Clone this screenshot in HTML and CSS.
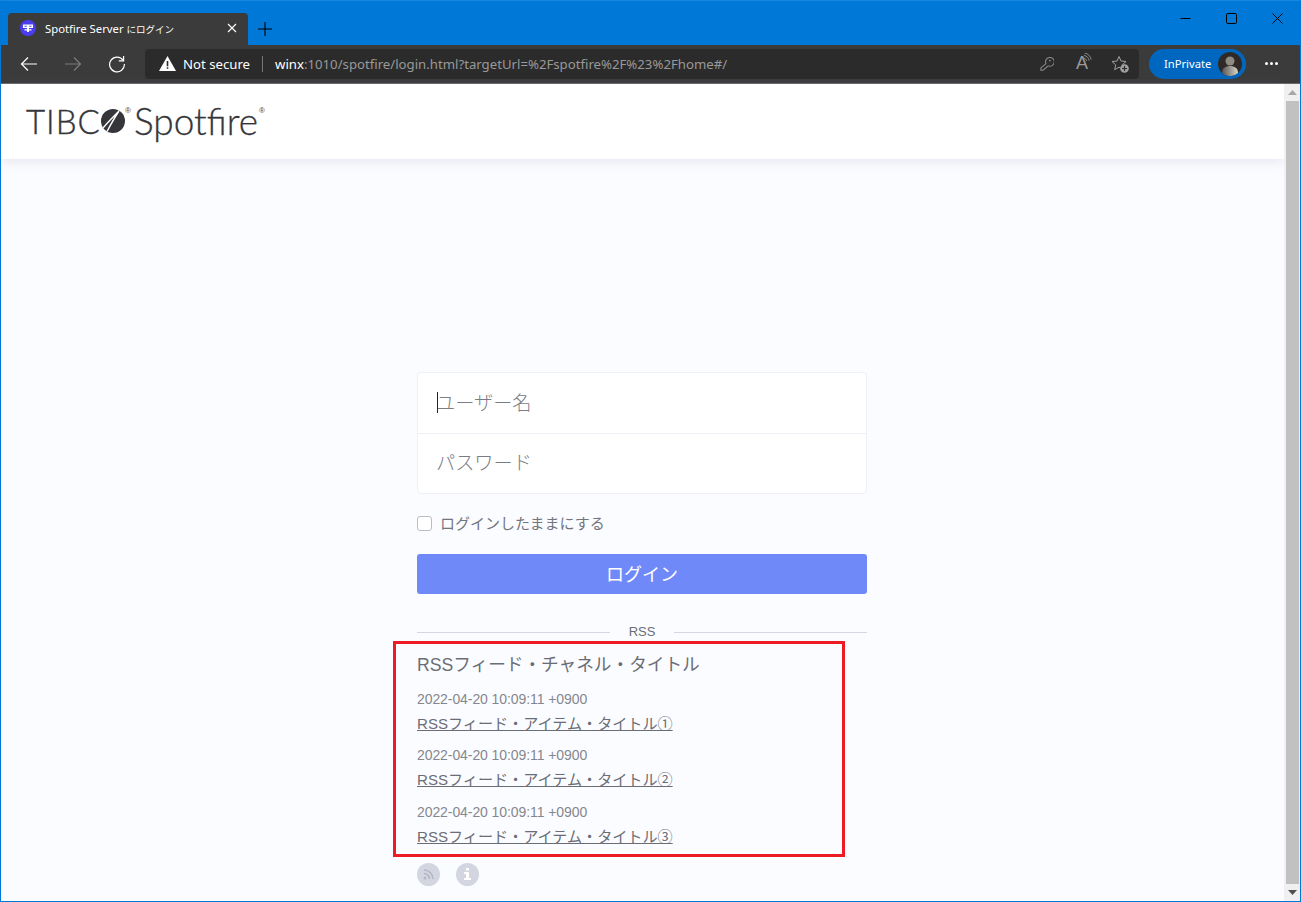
FILE: index.html
```html
<!DOCTYPE html>
<html lang="ja">
<head>
<meta charset="utf-8">
<title>Spotfire Server にログイン</title>
<link rel="stylesheet" href="styles.css">
</head>
<body>
<div class="window">
  <div class="titlebar">
    <div class="tab">
      <svg class="favicon" width="16" height="16" viewBox="0 0 16 16"><circle cx="8" cy="8" r="8" fill="#4a3df0"/><path d="M3 4.500h10v3.500H9v1.200h2.500v1.300H9V12H7v-1.500H4.500V9.200H7V8H3zM4.500 5.700v1.100h2.200V5.700zM9.300 5.700v1.100h2.200V5.700z" fill="#fff" fill-rule="evenodd"/></svg>
      <span class="tab-title">Spotfire Server <span class="tab-title-jp">にログイン</span></span>
      <svg class="tab-close" width="10" height="10" viewBox="0 0 10 10"><path d="M1 1l8 8M9 1l-8 8" stroke="#fff" stroke-width="1.100" fill="none"/></svg>
    </div>
    <svg class="new-tab" width="16" height="16" viewBox="0 0 16 16"><path d="M8 1v14M1 8h14" stroke="#000" stroke-width="1.100" fill="none"/></svg>
    <div class="caption">
      <svg width="11" height="11" viewBox="0 0 11 11"><path d="M.5 5.500h10" stroke="#000" fill="none"/></svg>
      <svg width="11" height="11" viewBox="0 0 11 11"><rect x=".5" y=".5" width="10" height="10" rx="1.200" stroke="#000" fill="none"/></svg>
      <svg width="11" height="11" viewBox="0 0 11 11"><path d="M.5.500l10 10M10.500.500l-10 10" stroke="#000" fill="none"/></svg>
    </div>
  </div>
  <div class="toolbar">
    <div class="nav">
      <svg width="18" height="18" viewBox="0 0 18 18"><path d="M17 9H1.500M8 2.500L1.500 9 8 15.500" stroke="#fff" stroke-width="1.200" fill="none"/></svg>
      <svg width="18" height="18" viewBox="0 0 18 18"><path d="M1 9h15.500M10 2.500L16.500 9 10 15.500" stroke="#7c7c7c" stroke-width="1.200" fill="none"/></svg>
      <svg width="18" height="18" viewBox="0 0 18 18"><path d="M15.200 5.400A7.400 7.400 0 1 0 16.400 9" stroke="#fff" stroke-width="1.200" fill="none"/><path d="M15.600 1v4.800h-4.800" stroke="#fff" stroke-width="1.200" fill="none"/></svg>
    </div>
    <div class="address">
      <svg class="warn" width="17" height="15" viewBox="0 0 17 15"><path d="M8.500 0L17 15H0z" fill="#fff"/><path d="M7.700 5h1.600v5.200H7.700zM7.700 11.200h1.600v1.600H7.700z" fill="#2b2b2b"/></svg>
      <span class="secure">Not secure</span>
      <span class="sep"></span>
      <span class="url"><b>winx</b>:1010/spotfire/login.html?targetUrl=%2Fspotfire%2F%23%2Fhome#/</span>
      <div class="addr-icons">
        <svg class="key" width="14" height="15" viewBox="0 0 16 17"><path d="M6.800 8.700a5 5 0 1 1 2.600 2.500L3.500 16.200H1v-2.700z" stroke="#8a8a8a" stroke-width="1.200" fill="none"/><circle cx="11.200" cy="5.200" r="1" fill="#8a8a8a"/></svg>
        <span class="read">A<svg width="9" height="11" viewBox="0 0 9 11"><path d="M1 5c1.400.4 2.400 1.500 2.700 3M1 2.400c2.800.5 4.700 2.500 5.200 5.200M1.500 0c3.500.6 6 3.200 6.700 6.500" stroke="#8a8a8a" fill="none"/></svg></span>
        <svg width="18" height="18" viewBox="0 0 18 18"><path d="M8 1.500l2 4.500 5 .5-3.700 3.300 1 4.800L8 12.200 3.700 14.700l1-4.800L1 6.500l5-.5z" stroke="#a0a0a0" fill="none"/><circle cx="13.500" cy="13.500" r="4.300" fill="#a0a0a0"/><path d="M13.500 11v5M11 13.500h5" stroke="#2b2b2b" stroke-width="1.200"/></svg>
      </div>
    </div>
    <div class="profile">
      <span class="profile-name">InPrivate</span>
      <span class="avatar"><svg width="24" height="24" viewBox="0 0 24 24"><defs><linearGradient id="av" x1="0" x2="1" y1="0" y2="0"><stop offset="0" stop-color="#555"/><stop offset="1" stop-color="#d8d4c8"/></linearGradient></defs><circle cx="12" cy="12" r="12" fill="#2f2a27"/><circle cx="12" cy="9" r="4.500" fill="#8f8a82"/><path d="M4 21c0-5 3.500-7 8-7s8 2 8 7a12 12 0 0 1-16 0z" fill="url(#av)"/></svg></span>
    </div>
    <div class="more"><i></i><i></i><i></i></div>
  </div>
  <div class="viewport">
    <div class="page">
      <header class="site-header">
        <div class="logo">
          <span class="logo-tibc">TIBC</span>
          <svg class="logo-disc" width="24" height="24" viewBox="0 0 24 24"><circle cx="12" cy="12" r="12" fill="#35363a"/><path d="M2 19C7 13 12 8 18 2M6 22.500C10 15 14 8 18 2" stroke="#fff" stroke-width="1.400" fill="none"/></svg>
          <sup class="logo-reg">®</sup>
          <span class="logo-spot">Spotfire</span>
          <sup class="logo-reg">®</sup>
        </div>
      </header>
      <main class="content">
        <form class="login">
          <div class="fields">
            <div class="field"><span class="caret"></span>ユーザー名</div>
            <div class="field">パスワード</div>
          </div>
          <label class="remember"><span class="check"></span>ログインしたままにする</label>
          <div class="submit">ログイン</div>
          <div class="divider"><span>RSS</span></div>
          <section class="feed">
            <h2 class="feed-title">RSSフィード・チャネル・タイトル</h2>
            <article class="item"><div class="date">2022-04-20 10:09:11 +0900</div><a class="link" href="#">RSSフィード・アイテム・タイトル①</a></article>
            <article class="item"><div class="date">2022-04-20 10:09:11 +0900</div><a class="link" href="#">RSSフィード・アイテム・タイトル②</a></article>
            <article class="item"><div class="date">2022-04-20 10:09:11 +0900</div><a class="link" href="#">RSSフィード・アイテム・タイトル③</a></article>
            <div class="highlight"></div>
          </section>
          <div class="foot-icons">
            <span class="round"><svg width="11" height="11" viewBox="0 0 11 11"><circle cx="2" cy="9" r="1.500" fill="#b4b6c2"/><path d="M1 4.500A5.500 5.500 0 0 1 6.500 10M1 1a9 9 0 0 1 9 9" stroke="#b4b6c2" stroke-width="1.500" fill="none"/></svg></span>
            <span class="round"><svg width="7" height="12" viewBox="0 0 7 12"><path d="M2 0h3v2.500H2zM0 4h5v6h2v2H0v-2h2V6H0z" fill="#fff"/></svg></span>
          </div>
        </form>
      </main>
    </div>
    <div class="scrollbar">
      <svg class="arrow" width="9" height="5" viewBox="0 0 9 5"><path d="M4.500 0L9 5H0z" fill="#a8a8a8"/></svg>
      <div class="thumb"></div>
      <svg class="arrow" width="9" height="5" viewBox="0 0 9 5"><path d="M0 0h9L4.500 5z" fill="#505050"/></svg>
    </div>
  </div>
</div>
</body>
</html>
```

FILE: styles.css
```css
* { box-sizing: border-box; }
html, body { margin: 0; height: 100%; overflow: hidden; }
body { font-family: "Liberation Sans", "Noto Sans CJK JP", sans-serif; }
.window {
  height: 902px;
  display: flex;
  flex-direction: column;
  border: 1px solid #0078d7;
  border-top-color: #1a86dc;
  background: #0078d7;
}
.titlebar { height: 44px; display: flex; align-items: flex-end; padding-left: 7px; flex: none; }
.tab {
  width: 240px; height: 32px; background: #3b3b3b; border-radius: 4px 4px 0 0;
  display: flex; align-items: center; padding: 0 11px 2px 12px; color: #fff;
}
.favicon { flex: none; }
.tab-title { font: 11.300px "Noto Sans", "Noto Sans CJK JP", sans-serif; margin-left: 9px; flex: 1; white-space: nowrap; }
.tab-title-jp { font-size: 9.500px; }
.tab-close { flex: none; }
.new-tab { margin: 0 0 8px 9px; }
.caption { margin-left: auto; display: flex; gap: 35px; padding: 0 17px 9px 0; align-self: flex-end; height: 100%; align-items: center; }
.caption svg { margin-top: -1px; }
.toolbar {
  height: 39px; flex: none; background: #3b3b3b; display: flex; align-items: center;
  border-bottom: 1px solid #6b6b6b; padding-bottom: 1px;
}
.nav { display: flex; gap: 26px; padding-left: 19px; width: 144px; flex: none; }
.address {
  width: 994px; height: 30px; background: #2b2b2b; border-radius: 4px; flex: none;
  display: flex; align-items: center; padding-left: 14px; font-size: 14px;
}
.secure { color: #fff; margin-left: 7px; font: 13.200px "Noto Sans", sans-serif; }
.sep { width: 1px; height: 16px; background: #777; margin: 0 12px; }
.url { color: #999; font: 13.200px "Noto Sans", sans-serif; white-space: nowrap; }
.url b { color: #fff; font-weight: 400; }
.warn { flex: none; }
.addr-icons { margin-left: auto; display: flex; align-items: center; gap: 19px; padding-right: 10px; }
.key { margin-right: 3px; }
.read { color: #9a9a9a; font: 18px "Liberation Sans", sans-serif; display: flex; align-items: flex-start; width: 16px; }
.read svg { margin: 0 0 0 -5px; flex: none; }
.profile {
  margin-left: 10px; width: 97px; height: 30px; border-radius: 15px; background: #0067c0;
  display: flex; align-items: center; justify-content: space-between; padding: 0 4px 0 15px; flex: none;
}
.profile-name { color: #fff; font: 11.200px "Noto Sans", sans-serif; }
.avatar { width: 24px; height: 24px; display: block; }
.avatar svg { display: block; }
.more { display: flex; gap: 2px; margin-left: 19px; }
.more i { width: 3px; height: 3px; border-radius: 50%; background: #fff; display: block; }
.viewport { flex: 1; display: flex; min-height: 0; }
.page { flex: 1; background: #fbfcff; display: flex; flex-direction: column; min-width: 0; }
.site-header {
  height: 75px; background: #fff; flex: none; padding: 0 25px 2px;
  box-shadow: 0 2px 12px rgba(110, 120, 160, .18); display: flex; align-items: center;
}
.logo { display: flex; align-items: center; color: #35363a; height: 36px; }
.logo-tibc { font: 300 33px Lato, sans-serif; width: 75px; letter-spacing: 1px; -webkit-text-stroke: .4px #35363a; }
.logo-disc { flex: none; }
.logo-reg { font: 8px "Liberation Sans", sans-serif; color: #444; align-self: flex-start; margin: 3px 0 0; width: 8px; line-height: 10px; }
.logo-spot { font: 300 37px Lato, sans-serif; margin-left: 1px; width: 125px; -webkit-text-stroke: .3px #35363a; }
.content { flex: 1; padding: 213px 1px 0 0; display: flex; justify-content: center; }
.login { width: 450px; color: #6b6d75; }
.fields { background: #fff; border: 1px solid #eef0f6; border-radius: 4px; }
.field {
  height: 60px; padding-left: 18px; font: 300 19.200px/58px "Noto Sans CJK JP", sans-serif; color: #7b7d85;
  position: relative;
}
.field + .field { border-top: 1px solid #eef0f6; line-height: 56px; }
.caret { position: absolute; left: 19px; top: 19px; width: 1px; height: 21px; background: #222; }
.remember { display: flex; align-items: center; margin-top: 18px; height: 22px; font: 15px/22px "Noto Sans CJK JP", sans-serif; color: #73757d; }
.check { width: 15px; height: 15px; background: #fff; border: 1px solid #bcbdc4; border-radius: 3px; margin-right: 8px; }
.submit {
  margin-top: 20px; height: 40px; background: #7089f9; border-radius: 3px; color: #fff;
  font: 18px/38px "Noto Sans CJK JP", sans-serif; text-align: center;
}
.divider { margin-top: 29px; margin-bottom: 1px; height: 16px; display: flex; align-items: center; font-size: 13px; color: #6b6d75; }
.divider::before, .divider::after { content: ""; height: 1px; background: #d4d6e2; flex: 1; position: relative; top: 1px; }
.divider span { width: 64px; text-align: center; }
.feed { position: relative; padding-top: 13px; }
.feed-title { margin: 0; font: 400 17.650px/24px "Liberation Sans", "Noto Sans CJK JP", sans-serif; color: #6b6d75; }
.item { margin-top: 10px; }
.item + .item { margin-top: 7.300px; }
.date { font-size: 14px; line-height: 24px; color: #85878e; margin-bottom: 1px; letter-spacing: -.08px; }
.link { font: 15.100px/24px "Liberation Sans", "Noto Sans CJK JP", sans-serif; color: #6b6d75; display: inline-block; text-decoration: underline; }
.highlight { position: absolute; left: -24px; top: 1px; width: 452px; height: 216px; border: 3px solid #ed1c24; pointer-events: none; }
.foot-icons { display: flex; gap: 16px; margin-top: 14px; }
.round { width: 23px; height: 23px; border-radius: 50%; background: #d3d5e0; display: flex; align-items: center; justify-content: center; }
.scrollbar {
  width: 16px; flex: none; background: #f0f0f0; display: flex; flex-direction: column; align-items: center;
  padding: 6px 0;
}
.arrow { flex: none; }
.thumb { width: 13px; flex: 1; background: #c1c1c1; margin: 6px 0; }
```
